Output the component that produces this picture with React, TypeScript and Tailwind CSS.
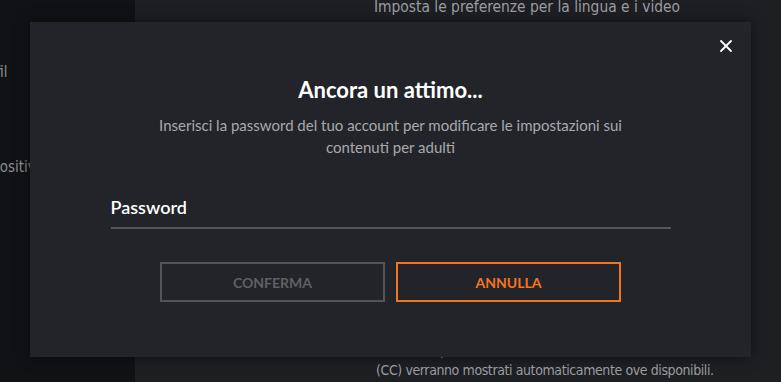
import React from 'react';
import { X } from 'lucide-react';

export default function App() {
  return (
    <div className="relative flex h-[382px] w-[781px] overflow-hidden bg-[#1e1f23]" style={{ fontFamily: 'Lato, "Noto Sans", sans-serif' }}>
      {/* Sidebar */}
      <div className="w-[135px] shrink-0 overflow-hidden bg-[#111215] text-[15px] text-[#8a8b8f]" style={{ fontFamily: '"DejaVu Sans Condensed", "Open Sans", sans-serif' }}>
        <div className="-ml-[26px] whitespace-nowrap pt-[60px] leading-[24px]">Profil</div>
        <div className="-ml-[30px] whitespace-nowrap pt-[71px] leading-[24px]">Dispositivi</div>
      </div>

      {/* Main settings content */}
      <div className="flex-1 whitespace-nowrap pl-[239px] text-[#9c9da1]" style={{ fontFamily: '"DejaVu Sans Condensed", "Open Sans", sans-serif' }}>
        <div className="-mt-[3px] text-[15.4px] leading-[20px]">Imposta le preferenze per la lingua e i video</div>
        <div className="mt-[323px] text-[14px] leading-[20px] tracking-[-0.4px]">I sottotitoli per non udenti (SDH) e le didascalie</div>
        <div className="pl-[2px] text-[14px] leading-[20px] tracking-[-0.4px]">(CC) verranno mostrati automaticamente ove disponibili.</div>
      </div>

      {/* Modal */}
      <div className="absolute left-[30px] top-[22px] flex h-[335px] w-[721px] flex-col items-center bg-[#232429] shadow-[0_0_12px_rgba(0,0,0,0.5)]">
        <button className="absolute right-[15px] top-[14px] text-white">
          <X className="h-[20px] w-[20px]" strokeWidth={2.2} />
        </button>
        <h2 className="mt-[54px] text-[22px] font-bold leading-[28px] text-white">Ancora un attimo...</h2>
        <p className="mt-[10px] w-[505px] text-center text-[15px] leading-[22px] text-[#a8a9ad]">
          Inserisci la password del tuo account per modificare le impostazioni sui contenuti per adulti
        </p>
        <div className="mt-[38px] w-[560px]">
          <label className="block text-[18px] font-semibold leading-[22px] text-white">Password</label>
          <div className="mt-[9px] h-[2px] bg-[#545559]" />
        </div>
        <div className="mt-[33px] flex gap-[11px]">
          <button className="h-[40px] w-[225px] border-2 border-[#545559] text-[14px] font-bold text-[#5f6064]">CONFERMA</button>
          <button className="h-[40px] w-[225px] border-2 border-[#f47521] text-[14px] font-bold text-[#f47521]">ANNULLA</button>
        </div>
      </div>
    </div>
  );
}
